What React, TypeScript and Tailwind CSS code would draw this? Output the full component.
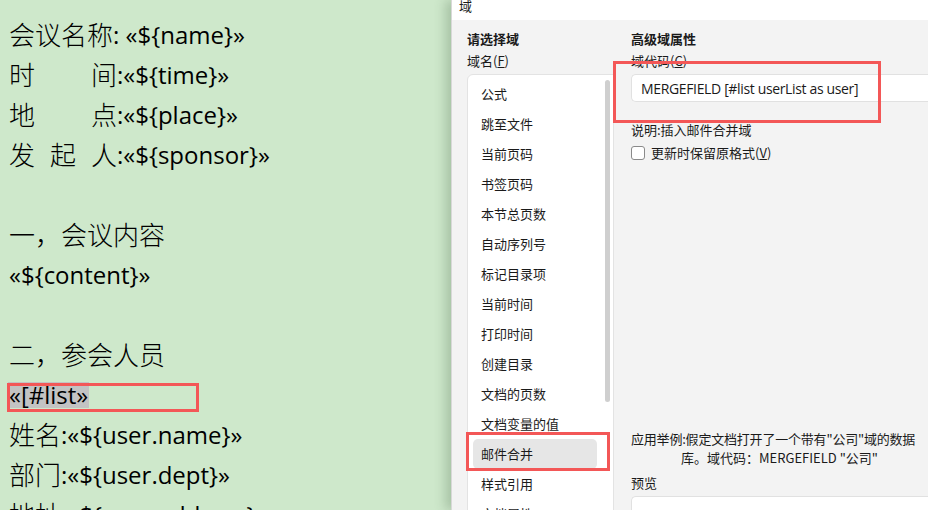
import React from 'react';

const cjk = "font-['Noto_Sans_CJK_SC',sans-serif]";

function C({ children }: { children: React.ReactNode }) {
  return <span className="text-[26px] font-light">{children}</span>;
}

function Spread({ chars }: { chars: string[] }) {
  return (
    <span className="inline-flex w-[108px] justify-between text-[26px] font-light">
      {chars.map((c) => (
        <span key={c}>{c}</span>
      ))}
    </span>
  );
}

const fieldItems = [
  '公式',
  '跳至文件',
  '当前页码',
  '书签页码',
  '本节总页数',
  '自动序列号',
  '标记目录项',
  '当前时间',
  '打印时间',
  '创建目录',
  '文档的页数',
  '文档变量的值',
  '邮件合并',
  '样式引用',
  '文档属性',
];

export default function App() {
  return (
    <div className="w-[928px] h-[510px] overflow-hidden flex relative bg-white">
      {/* Document (eye-care green) */}
      <div className="w-[451px] shrink-0 bg-[#cee8cb] pt-[15px] pl-[9px] text-black text-[24px] font-['Open_Sans','Noto_Sans_CJK_SC',sans-serif]">
        <div className="h-[40px] flex items-center whitespace-pre">
          <C>会议名称</C>: «${'{'}name{'}'}»
        </div>
        <div className="h-[40px] flex items-center whitespace-pre">
          <Spread chars={['时', '间']} />:«${'{'}time{'}'}»
        </div>
        <div className="h-[40px] flex items-center whitespace-pre">
          <Spread chars={['地', '点']} />:«${'{'}place{'}'}»
        </div>
        <div className="h-[40px] flex items-center whitespace-pre">
          <Spread chars={['发', '起', '人']} />:«${'{'}sponsor{'}'}»
        </div>
        <div className="h-[40px]" />
        <div className="h-[40px] flex items-center">
          <C>一，会议内容</C>
        </div>
        <div className="h-[40px] flex items-center">«${'{'}content{'}'}»</div>
        <div className="h-[40px]" />
        <div className="h-[40px] flex items-center">
          <C>二，参会人员</C>
        </div>
        <div className="h-[40px] flex items-center">
          <span className="bg-[#c3c3c3] h-[26px] leading-[26px] -ml-[1px] pl-[1px] pr-[1px]">«[#list»</span>
        </div>
        <div className="h-[40px] flex items-center whitespace-pre">
          <C>姓名</C>:«${'{'}user.name{'}'}»
        </div>
        <div className="h-[40px] flex items-center whitespace-pre">
          <C>部门</C>:«${'{'}user.dept{'}'}»
        </div>
        <div className="h-[40px] flex items-center whitespace-pre">
          <C>地址</C>:«${'{'}user.address{'}'}»
        </div>
      </div>

      {/* Field dialog */}
      <div
        className={`flex-1 flex flex-col bg-[#f3f3f3] border-l border-[#d8d8d8] shadow-[-6px_0_10px_rgba(60,90,60,0.25)] text-[13px] text-[#1a1a1a] ${cjk}`}
      >
        <div className="h-[20px] bg-white shrink-0 pl-[7px] leading-[12px]">域</div>
        <div className="flex-1 flex min-h-0">
          {/* Left column */}
          <div className="w-[162px] shrink-0 pl-[15px] flex flex-col">
            <div className="font-bold mt-[10px] leading-[18px]">请选择域</div>
            <div className="mt-[4px] leading-[18px]">域名(<span className="underline">F</span>)</div>
            <div className="mt-[4px] flex-1 bg-white border border-[#e3e3e3] rounded-tl-[6px] relative pt-[4px] pl-[5px] pr-[16px]">
              {fieldItems.map((it) => (
                <div
                  key={it}
                  className={`h-[30px] leading-[30px] pl-[8px] rounded-[5px] ${it === '邮件合并' ? 'bg-[#e6e6e6]' : ''}`}
                >
                  {it}
                </div>
              ))}
              <div className="absolute right-[3px] top-[5px] w-[5px] h-[322px] rounded-full bg-[#cfcfcf]" />
            </div>
          </div>

          {/* Right column */}
          <div className="flex-1 pl-[17px] flex flex-col min-w-0">
            <div className="font-bold mt-[10px] leading-[18px]">高级域属性</div>
            <div className="mt-[4px] leading-[18px]">域代码(<span className="underline">C</span>)</div>
            <div className="mt-[4px] h-[28px] bg-white border border-[#e1e1e1] border-r-0 rounded-l-[5px] pl-[9px] flex items-center text-[14px] font-['Open_Sans',sans-serif] tracking-[-0.35px] whitespace-nowrap">
              MERGEFIELD [#list userList as user]
            </div>
            <div className="mt-[19px] leading-[18px]">说明:插入邮件合并域</div>
            <div className="mt-[5px] flex items-center h-[18px]">
              <span className="w-[14px] h-[14px] border border-[#8a8a8a] rounded-[3px] bg-white" />
              <span className="ml-[6px]">
                更新时保留原格式(<span className="underline">V</span>)
              </span>
            </div>
            <div className="flex-1" />
            <div className="leading-[19px] whitespace-nowrap tracking-[-0.2px]">
              应用举例:假定文档打开了一个带有"公司"域的数据
            </div>
            <div className="leading-[19px] whitespace-nowrap text-center">
              库。域代码：MERGEFIELD "公司"
            </div>
            <div className="mt-[7px] leading-[18px]">预览</div>
            <div className="mt-[4px] h-[14px] bg-white border border-[#e1e1e1] border-r-0 border-b-0 rounded-tl-[5px] shrink-0" />
          </div>
        </div>
      </div>

      {/* Red annotation boxes */}
      <div className="absolute left-[7px] top-[383px] w-[192px] h-[29px] border-[3px] border-[#f35757]" />
      <div className="absolute left-[466px] top-[432px] w-[144px] h-[39px] border-[3px] border-[#f35757]" />
      <div className="absolute left-[613px] top-[61px] w-[268px] h-[62px] border-[3px] border-[#f35757]" />
    </div>
  );
}
